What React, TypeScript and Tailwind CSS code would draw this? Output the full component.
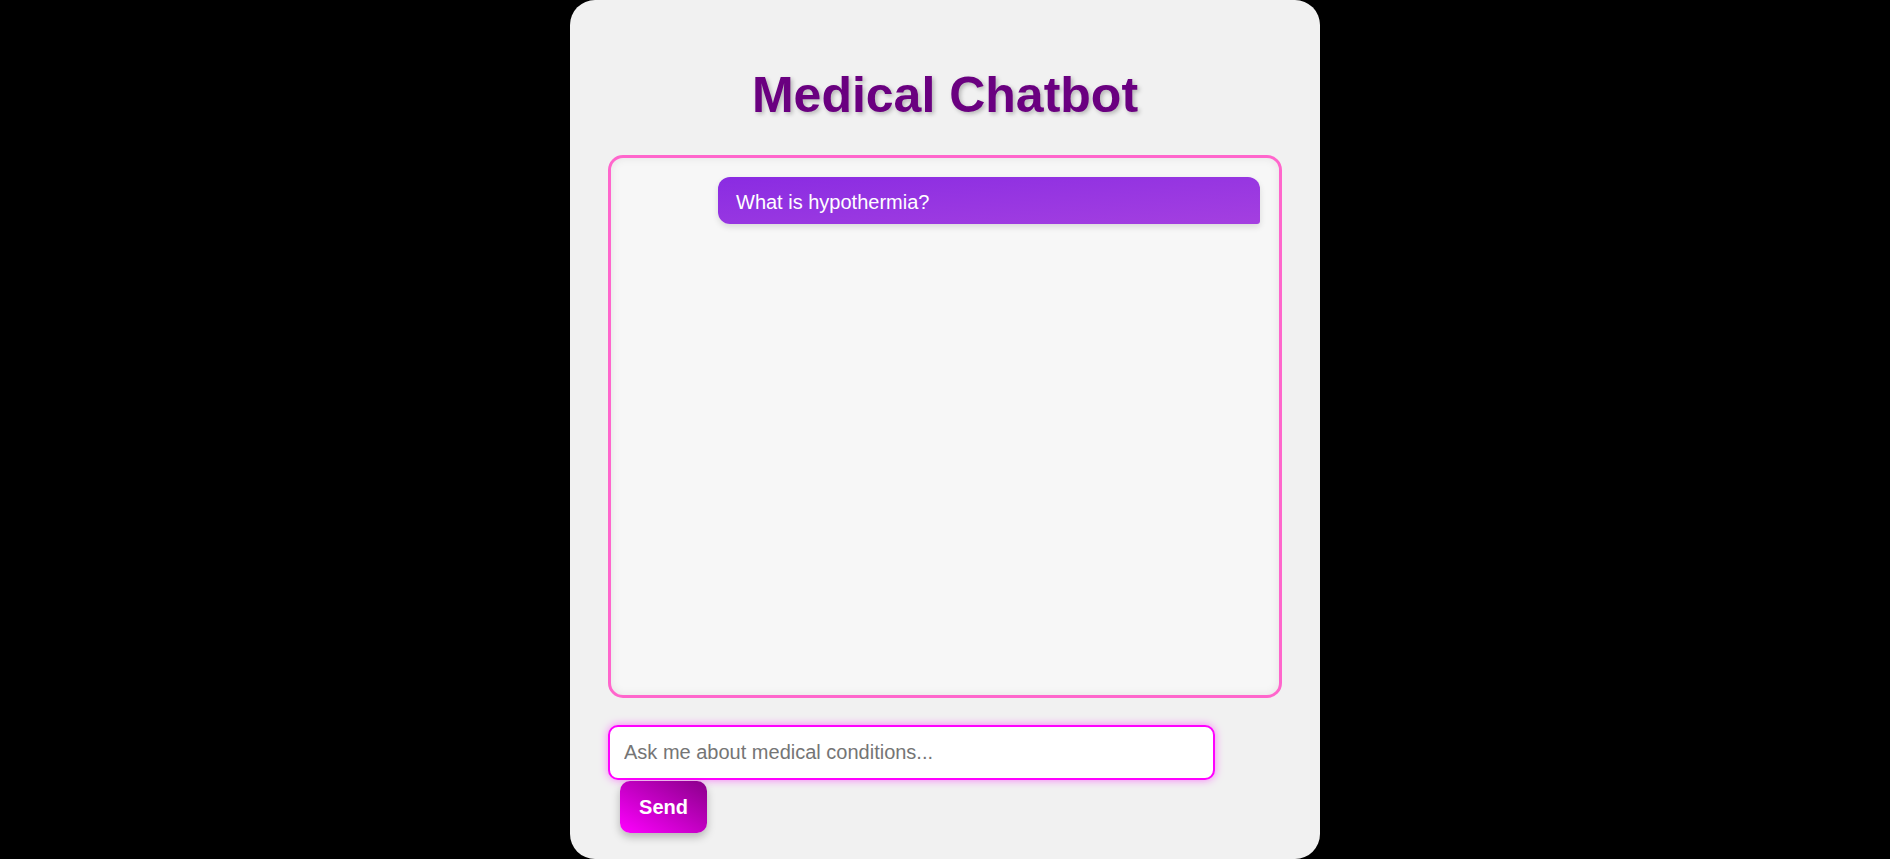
export default function App() {
  return (
    <div className="min-h-screen bg-black flex justify-center font-['Liberation_Sans',Arial,sans-serif]">
      <div className="w-[750px] h-[859px] bg-[#f1f1f1] rounded-[25px] px-[38px] pt-[70px]">
        <h1 className="text-[50px] leading-[50px] font-bold text-center text-[#6a0080] [text-shadow:2px_2px_4px_rgba(0,0,0,0.25)]">
          Medical Chatbot
        </h1>

        {/* Chat window */}
        <div className="mt-[35px] h-[543px] rounded-[15px] border-[3px] border-[#ff66cc] bg-[#f7f7f7] shadow-[inset_0_0_10px_rgba(0,0,0,0.08)] pt-[19px] pr-[19px] pl-[19px]">
          <div className="ml-auto w-[542px] rounded-[12px] rounded-br-[3px] bg-gradient-to-br from-[#8a2be2] to-[#a43fe0] pl-[18px] pr-[14px] pt-[13px] pb-[9px] text-[20px] leading-[25px] text-white shadow-[0_3px_6px_rgba(0,0,0,0.12)]">
            What is hypothermia?
          </div>
        </div>

        {/* Input area */}
        <div className="mt-[27px]">
          <input
            type="text"
            placeholder="Ask me about medical conditions..."
            className="block w-[607px] h-[55px] rounded-[10px] border-2 border-[#ff00ff] bg-white px-[14px] text-[20px] text-[#333] placeholder:text-[#757575] shadow-[0_0_8px_rgba(255,0,255,0.5)] outline-none"
          />
          <button className="ml-[12px] mt-[1px] w-[87px] h-[52px] rounded-[10px] bg-gradient-to-tr from-[#ff00ff] to-[#8b008b] text-white text-[20px] font-bold shadow-[0_4px_8px_rgba(0,0,0,0.25)]">
            Send
          </button>
        </div>
      </div>
    </div>
  );
}
